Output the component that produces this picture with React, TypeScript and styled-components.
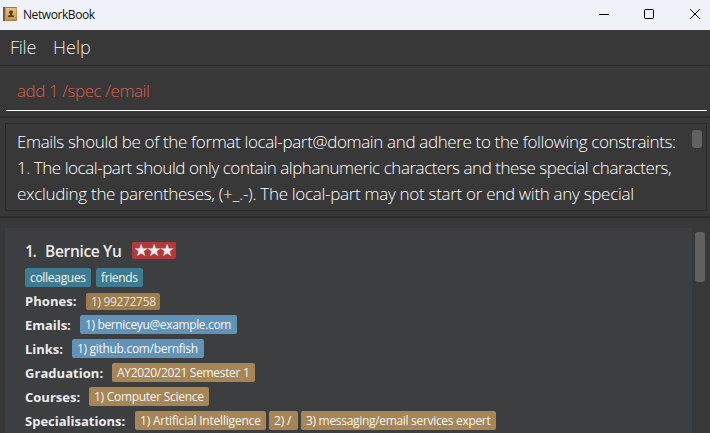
import React from 'react';
import styled, { createGlobalStyle } from 'styled-components';

const GlobalStyle = createGlobalStyle`
  * { box-sizing: border-box; }
  body { margin: 0; overflow: hidden; background: #383838; font-family: "Open Sans", sans-serif; }
`;

const Window = styled.div`
  display: flex;
  flex-direction: column;
  width: 710px;
  height: 433px;
  overflow: hidden;
  background: #383838;
  white-space: pre;
`;

const TitleBar = styled.header`
  display: flex;
  align-items: center;
  flex: none;
  height: 30px;
  padding: 0 9px 2px 3px;
  background: #eff3f9;
`;

const Title = styled.span`
  flex: 1;
  margin-left: 6px;
  color: #111;
  font-size: 12px;
  line-height: 28px;
  letter-spacing: -0.42px;
  padding-top: 2px;
`;

const Controls = styled.div`
  display: flex;
  gap: 33px;

  svg:last-child {
    margin-left: 1px;
  }
`;

const MenuBar = styled.nav`
  display: flex;
  flex: none;
  gap: 17px;
  height: 36px;
  padding-left: 10px;
  border-bottom: 1px solid #2a2a2a;
`;

const MenuItem = styled.span<{ $spacing: number }>`
  color: #e6e6e6;
  font-size: 18px;
  font-weight: 300;
  line-height: 35px;
  letter-spacing: ${p => p.$spacing}px;
`;

const CommandArea = styled.div`
  flex: none;
  height: 52px;
  padding: 8px 3px 0 6px;
  border-bottom: 2px solid #2c2c2c;
`;

const CommandField = styled.div`
  height: 37px;
  padding-left: 11px;
  border-bottom: 1px solid #fff;
  color: #d3614c;
  font-size: 17px;
  font-weight: 300;
  line-height: 34px;
  letter-spacing: -0.44px;
`;

const ResultArea = styled.div`
  flex: none;
  height: 100px;
  padding: 5px 3px 5px 5px;
  border-bottom: 2px solid #2c2c2c;
`;

const ResultBox = styled.div`
  display: flex;
  justify-content: space-between;
  height: 88px;
  padding: 5px 4px 0 11px;
  border: 1px solid #2a2a2a;
`;

const ResultLine = styled.div<{ $spacing: number }>`
  height: 26px;
  color: #fff;
  font-size: 17px;
  font-weight: 300;
  line-height: 26px;
  letter-spacing: ${p => p.$spacing}px;
`;

const Thumb = styled.div<{ $height: number; $top: number }>`
  flex: none;
  width: 10px;
  height: ${p => p.$height}px;
  margin-top: ${p => p.$top}px;
  border-radius: 3px;
  background: #616161;
`;

const ListArea = styled.main`
  display: flex;
  flex: 1;
  gap: 3px;
  padding: 10px 5px 0;
`;

const Card = styled.section`
  width: 687px;
  padding: 13px 0 0 20px;
  background: #3c3e3f;
`;

const NameRow = styled.div`
  display: flex;
  align-items: center;
  height: 19px;
  color: #ececec;
  font-size: 15.5px;
  font-weight: 600;
`;

const Index = styled.span`
  width: 20px;
  letter-spacing: -1.4px;
`;

const Name = styled.span`
  width: 87px;
  letter-spacing: -0.32px;
`;

const Rating = styled.span`
  display: flex;
  justify-content: center;
  width: 44px;
  height: 17px;
  padding-right: 2px;
  border-radius: 2px;
  background: #b2393b;
  color: #f0eeee;
  font: 17px/16px "DejaVu Sans", sans-serif;
  letter-spacing: -2.2px;
`;

const TagRow = styled.div`
  display: flex;
  align-items: center;
  height: 33px;
  padding-top: 2px;
`;

const FieldRow = styled.div<{ $compact: boolean }>`
  display: flex;
  align-items: center;
  height: ${p => (p.$compact ? 17 : 24)}px;
  margin-bottom: ${p => (p.$compact ? 2 : 0)}px;
  padding-top: ${p => (p.$compact ? 0 : 1)}px;
`;

const Label = styled.span<{ $width: number; $spacing: number; $drop: number }>`
  width: ${p => p.$width}px;
  padding-top: ${p => p.$drop}px;
  color: #ececec;
  font-size: 13px;
  font-weight: 700;
  line-height: 17px;
  letter-spacing: ${p => p.$spacing}px;
`;

const tones = { teal: '#3e7b91', tan: '#a68556', dim: '#9d7d4e', blue: '#6193b8' };

const Tag = styled.span<{ $tone: keyof typeof tones; $width: number; $spacing: number }>`
  width: ${p => p.$width}px;
  height: ${p => (p.$tone === 'dim' ? 17 : 19)}px;
  margin-right: ${p => (p.$tone === 'teal' ? 5 : 3)}px;
  padding-left: 5px;
  border-radius: 2px;
  background: ${p => tones[p.$tone]};
  color: ${p => (p.$tone === 'dim' ? '#e8e3da' : '#f7f7f5')};
  font-size: 12px;
  line-height: ${p => (p.$tone === 'dim' ? 17 : 19)}px;
  letter-spacing: ${p => p.$spacing}px;
`;

type TagData = [text: string, width: number, spacing: number];
type Field = { label: string; width: number; spacing: number; tone: keyof typeof tones; tags: TagData[] };

const fields: Field[] = [
  { label: 'Phones:', width: 61, spacing: 0.06, tone: 'dim', tags: [['1) 99272758', 74, -0.34]] },
  { label: 'Emails:', width: 55, spacing: -0.04, tone: 'blue', tags: [['1) berniceyu@example.com', 157, -0.36]] },
  { label: 'Links:', width: 47, spacing: -0.03, tone: 'blue', tags: [['1) github.com/bernfish', 132, -0.31]] },
  { label: 'Graduation:', width: 87, spacing: 0.04, tone: 'tan', tags: [['AY2020/2021 Semester 1', 143, -0.32]] },
  { label: 'Courses:', width: 64, spacing: 0, tone: 'tan', tags: [['1) Computer Science', 120, -0.28]] },
  {
    label: 'Specialisations:', width: 110, spacing: 0, tone: 'tan',
    tags: [['1) Artificial Intelligence', 131, -0.2], ['2) /', 29, -0.2], ['3) messaging/email services expert', 195, -0.31]],
  },
];

const BookIcon = () => (
  <svg width="14" height="14" viewBox="0 0 14 14">
    <defs>
      <linearGradient id="cover" x2="0" y2="1">
        <stop stopColor="#e6c47c" />
        <stop offset="1" stopColor="#c9933f" />
      </linearGradient>
    </defs>
    <rect width="14" height="14" rx="1" fill="#a77a3b" />
    <rect x="3" y="1" width="10.5" height="12" fill="url(#cover)" />
    <rect width="2.5" height="14" fill="#6f5b49" />
    <rect x="2" width="1" height="14" fill="#b99a67" />
    <path d="M8 3.5a1.8 1.8 0 0 1 1 3.4v1L11 8.8V10H5V8.8l2-.9v-1a1.8 1.8 0 0 1 1-3.4z" fill="#51412c" />
  </svg>
);

export default function App() {
  return (
    <>
      <GlobalStyle />
      <Window>
        <TitleBar>
          <BookIcon />
          <Title>NetworkBook</Title>
          <Controls>
            <svg width="12" height="12" viewBox="0 0 12 12"><path d="M1 6.5h10" stroke="#000" /></svg>
            <svg width="12" height="12" viewBox="0 0 12 12"><rect x="1.5" y="1.5" width="9" height="9" rx="0.8" fill="none" stroke="#000" /></svg>
            <svg width="12" height="12" viewBox="0 0 12 12"><path d="M1.2 1.2l9.6 9.6M10.8 1.2l-9.6 9.6" stroke="#000" /></svg>
          </Controls>
        </TitleBar>
        <MenuBar>
          <MenuItem $spacing={-0.25}>File</MenuItem>
          <MenuItem $spacing={0}>Help</MenuItem>
        </MenuBar>
        <CommandArea>
          <CommandField>add 1 /spec /email</CommandField>
        </CommandArea>
        <ResultArea>
          <ResultBox>
            <div>
              <ResultLine $spacing={-0.356}>Emails should be of the format local-part@domain and adhere to the following constraints:</ResultLine>
              <ResultLine $spacing={-0.453}>1. The local-part should only contain alphanumeric characters and these special characters,</ResultLine>
              <ResultLine $spacing={-0.3}>excluding the parentheses, (+_.-). The local-part may not start or end with any special</ResultLine>
            </div>
            <Thumb $height={18} $top={1} />
          </ResultBox>
        </ResultArea>
        <ListArea>
          <Card>
            <NameRow>
              <Index>1.</Index>
              <Name>Bernice Yu</Name>
              <Rating>★★★</Rating>
            </NameRow>
            <TagRow>
              <Tag $tone="teal" $width={66} $spacing={-0.3}>colleagues</Tag>
              <Tag $tone="teal" $width={47} $spacing={-0.38}>friends</Tag>
            </TagRow>
            {fields.map(f => (
              <FieldRow key={f.label} $compact={f.tone === 'dim'}>
                <Label $width={f.width} $spacing={f.spacing} $drop={f.tone === 'dim' ? 0 : 2}>{f.label}</Label>
                {f.tags.map(([text, width, spacing]) => (
                  <Tag key={text} $tone={f.tone} $width={width} $spacing={spacing}>{text}</Tag>
                ))}
              </FieldRow>
            ))}
          </Card>
          <Thumb $height={50} $top={4} />
        </ListArea>
      </Window>
    </>
  );
}
